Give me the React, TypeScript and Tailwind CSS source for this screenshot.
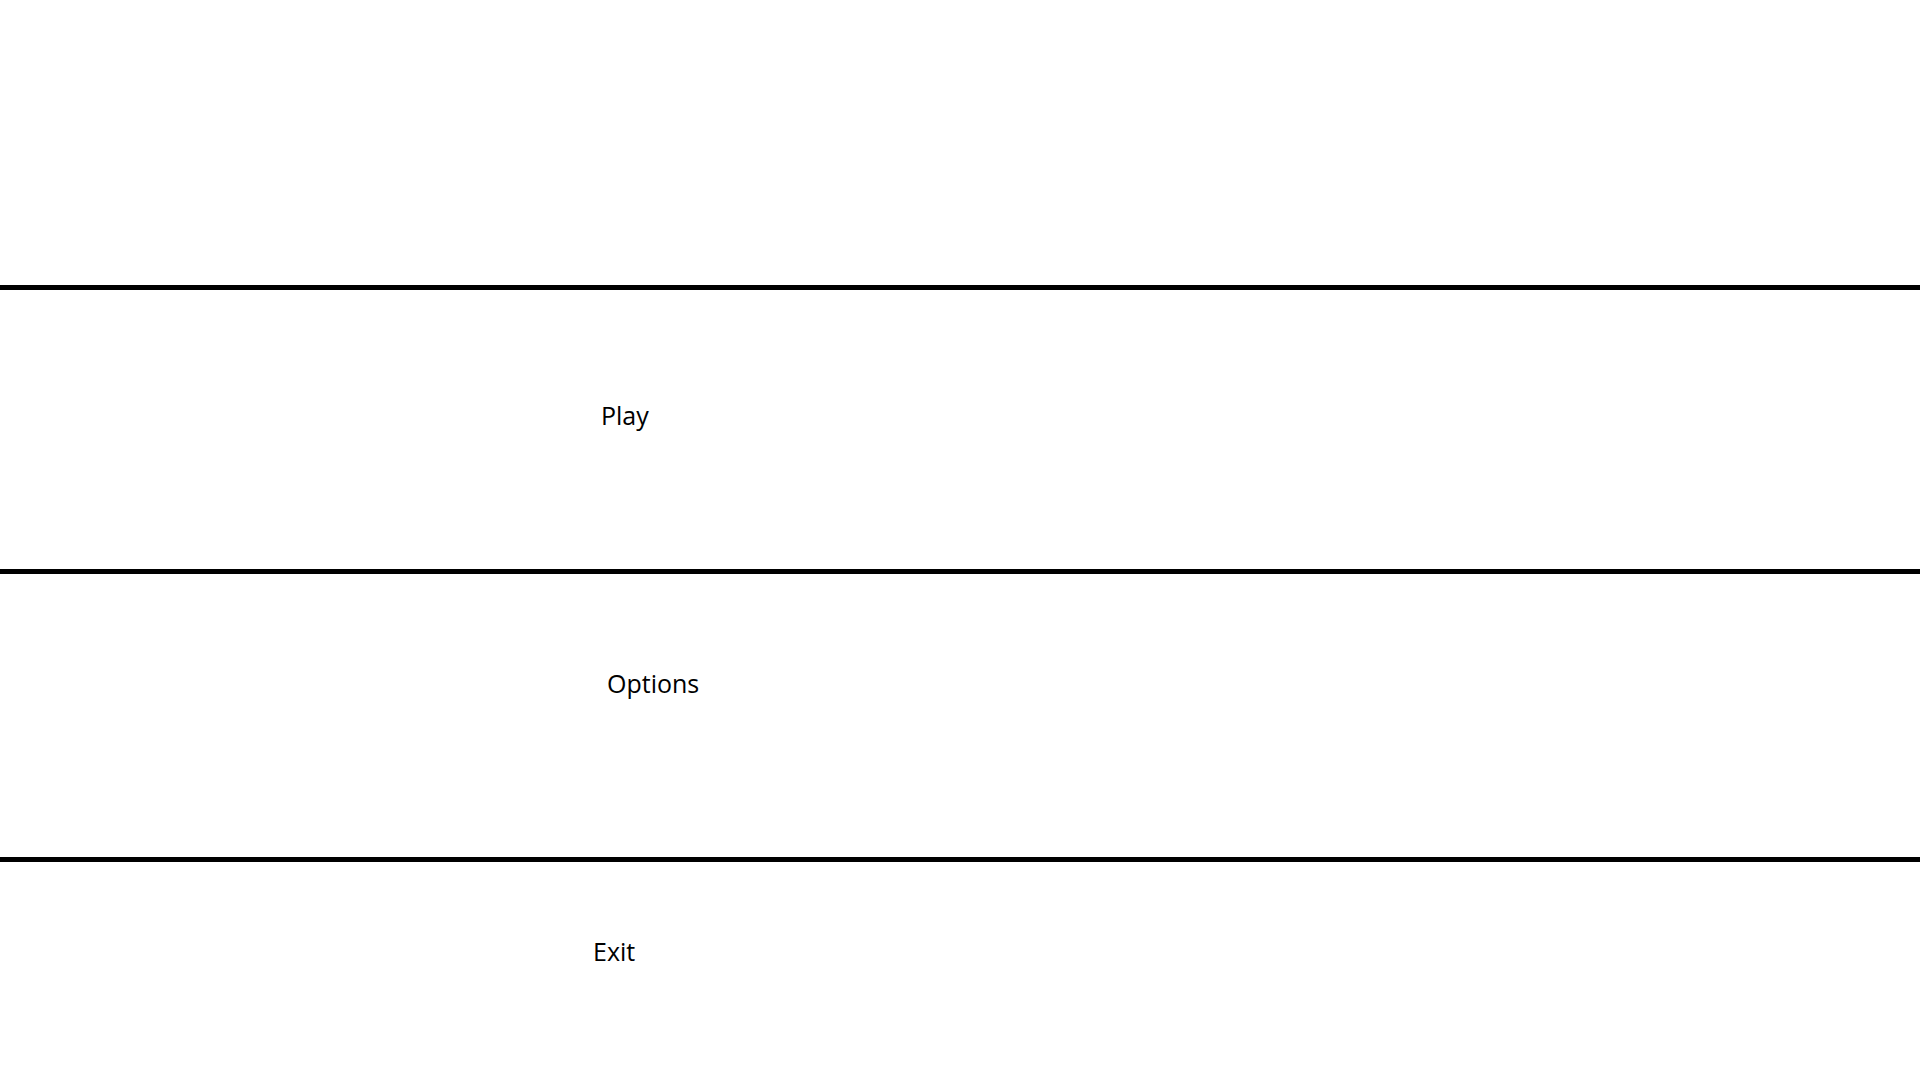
export default function App() {
  const font = { fontFamily: '"Open Sans", "Liberation Sans", sans-serif' };
  return (
    <div className="w-[1920px] h-[1080px] bg-white text-black overflow-hidden flex flex-col" style={font}>
      <div className="h-[285px]" />
      <div className="h-[284px] border-t-[5px] border-black pt-[108px] pl-[601px]">
        <span className="text-[25px] leading-[34px]">Play</span>
      </div>
      <div className="h-[288px] border-t-[5px] border-black pt-[92px] pl-[607px]">
        <span className="text-[25px] leading-[34px]">Options</span>
      </div>
      <div className="flex-1 border-t-[5px] border-black pt-[72px] pl-[593px]">
        <span className="text-[25px] leading-[34px]">Exit</span>
      </div>
    </div>
  );
}
